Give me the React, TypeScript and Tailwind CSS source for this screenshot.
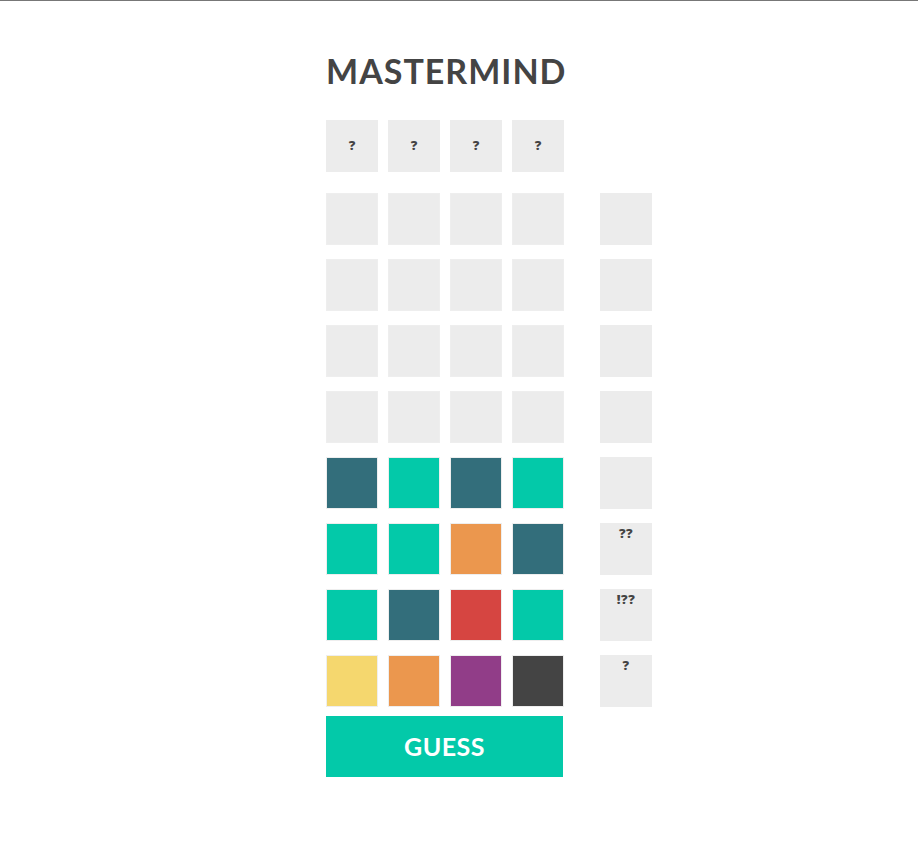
const rows: (string | null)[][] = [
  [null, null, null, null],
  [null, null, null, null],
  [null, null, null, null],
  [null, null, null, null],
  ['bg-[#336e7b]', 'bg-[#03c9a9]', 'bg-[#336e7b]', 'bg-[#03c9a9]'],
  ['bg-[#03c9a9]', 'bg-[#03c9a9]', 'bg-[#eb974e]', 'bg-[#336e7b]'],
  ['bg-[#03c9a9]', 'bg-[#336e7b]', 'bg-[#d64541]', 'bg-[#03c9a9]'],
  ['bg-[#f5d76e]', 'bg-[#eb974e]', 'bg-[#913d88]', 'bg-[#444444]'],
]

const hints = ['', '', '', '', '', '??', '!??', '?']

export default function App() {
  return (
    <div className="min-h-[867px] border-t border-[#777] bg-white font-['Lato',sans-serif] text-[#444]">
      <div className="mx-auto w-[266px] pt-[50px]">
        <h1 className="h-[40px] text-[34px] font-bold leading-[40px] tracking-[1px]">MASTERMIND</h1>

        <div className="mt-[29px] flex gap-[10px]">
          {[0, 1, 2, 3].map((i) => (
            <div
              key={i}
              className="flex h-[52px] w-[52px] items-center justify-center bg-[#ececec] font-['Open_Sans',sans-serif] text-[13px] font-extrabold"
            >
              ?
            </div>
          ))}
        </div>

        <div className="mt-[21px] flex flex-col gap-[14px]">
          {rows.map((row, r) => (
            <div key={r} className="flex">
              <div className="flex gap-[10px]">
                {row.map((c, i) => (
                  <div key={i} className={`h-[52px] w-[52px] border border-[#eee] ${c ?? 'bg-[#ececec]'}`} />
                ))}
              </div>
              <div className="ml-[36px] flex h-[52px] w-[52px] shrink-0 justify-center bg-[#ececec] pt-[1px] font-['Open_Sans',sans-serif] text-[13px] font-extrabold leading-[18px] tracking-[0.5px]">
                {hints[r]}
              </div>
            </div>
          ))}
        </div>

        <button className="mt-[9px] h-[61px] w-[237px] bg-[#03c9a9] text-[25px] font-bold tracking-[0.5px] text-white">
          GUESS
        </button>
      </div>
    </div>
  )
}
